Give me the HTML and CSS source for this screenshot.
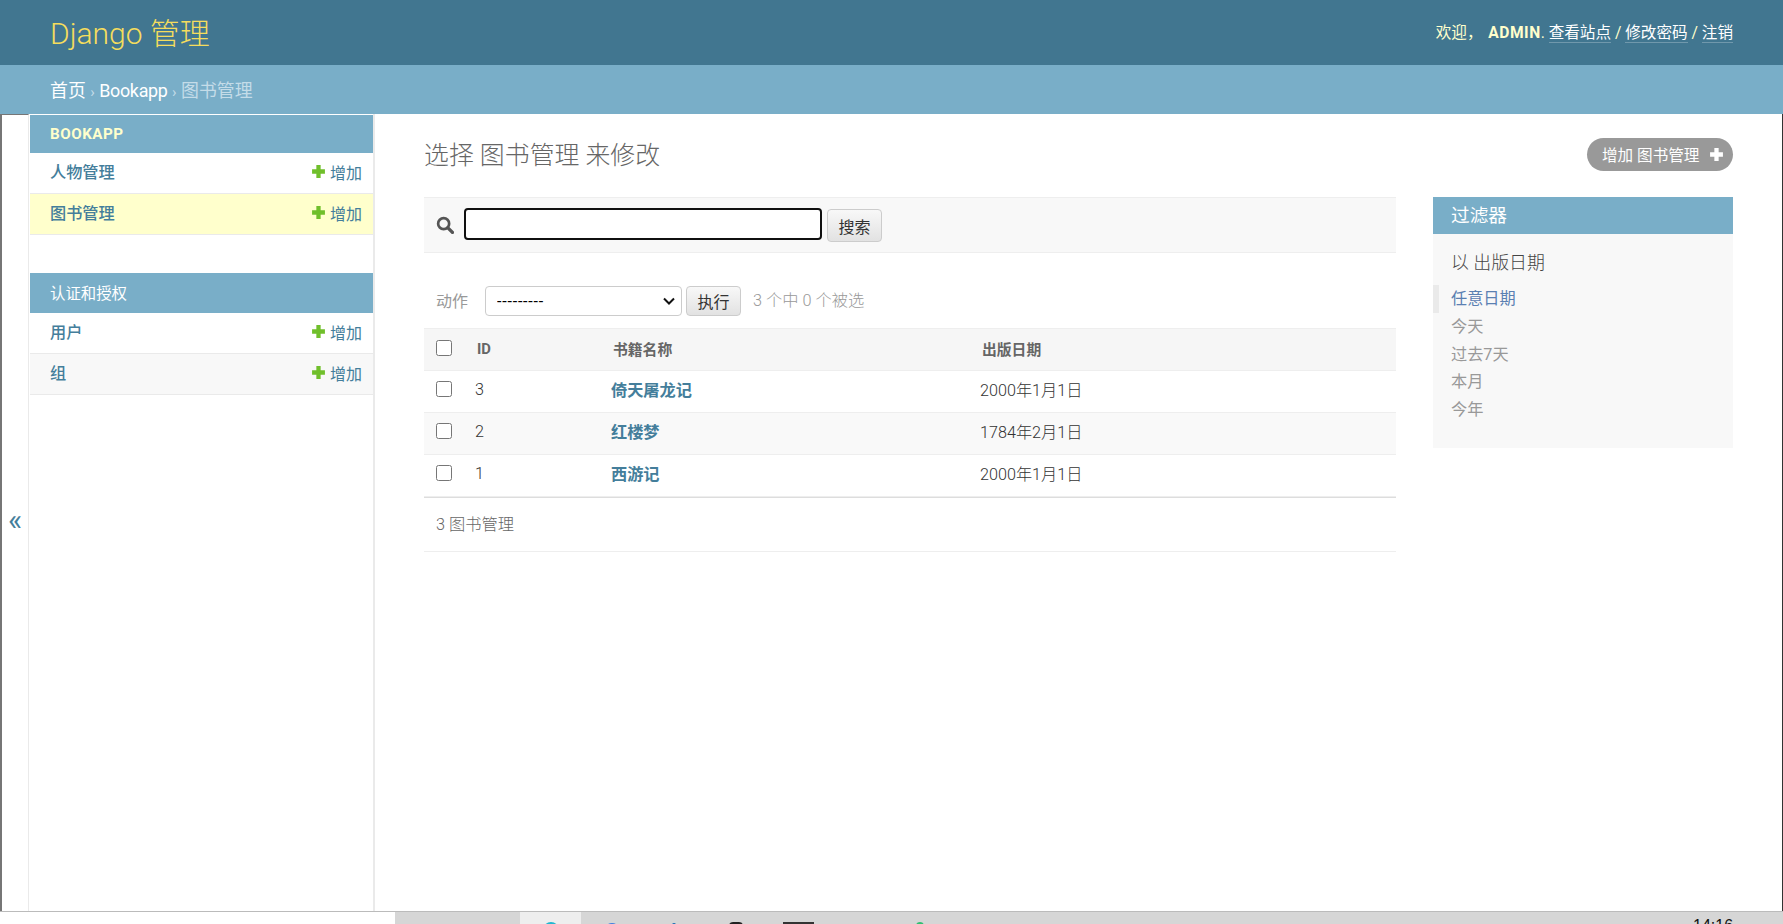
FILE: index.html
```html
<!DOCTYPE html>
<html lang="zh-CN">
<head>
    <meta charset="UTF-8">
    <title>选择 图书管理 来修改 | Django 站点管理员</title>
    <link rel="stylesheet" href="styles.css">
</head>
<body>
    <div class="window">
        <div id="header">
            <div class="branding">Django 管理</div>
            <div class="usertools">
                欢迎， <strong>ADMIN</strong>.
                <a href="#">查看站点</a> / <a href="#">修改密码</a> / <a href="#">注销</a>
            </div>
        </div>
        <div class="breadcrumbs">
            <a href="#">首页</a> <span class="sep">›</span> <a href="#" class="crumb-app">Bookapp</a> <span class="sep">›</span> 图书管理
        </div>
        <div class="main">
            <button class="toggle-nav">«</button>
            <div class="sidebar">
                <div class="app">
                    <div class="caption bold">BOOKAPP</div>
                    <div class="app-row">
                        <a href="#" class="model">人物管理</a>
                        <a href="#" class="addlink"><svg class="plus" viewBox="0 0 14 14"><path d="M5 1h4v4h4v4H9v4H5V9H1V5h4z" fill="#70bf2b"/></svg>增加</a>
                    </div>
                    <div class="app-row current">
                        <a href="#" class="model">图书管理</a>
                        <a href="#" class="addlink"><svg class="plus" viewBox="0 0 14 14"><path d="M5 1h4v4h4v4H9v4H5V9H1V5h4z" fill="#70bf2b"/></svg>增加</a>
                    </div>
                </div>
                <div class="app">
                    <div class="caption">认证和授权</div>
                    <div class="app-row">
                        <a href="#" class="model">用户</a>
                        <a href="#" class="addlink"><svg class="plus" viewBox="0 0 14 14"><path d="M5 1h4v4h4v4H9v4H5V9H1V5h4z" fill="#70bf2b"/></svg>增加</a>
                    </div>
                    <div class="app-row alt">
                        <a href="#" class="model">组</a>
                        <a href="#" class="addlink"><svg class="plus" viewBox="0 0 14 14"><path d="M5 1h4v4h4v4H9v4H5V9H1V5h4z" fill="#70bf2b"/></svg>增加</a>
                    </div>
                </div>
            </div>
            <div class="content">
                <div class="content-head">
                    <h1>选择 图书管理 来修改</h1>
                    <a href="#" class="addbtn"><span class="addbtn-text">增加 图书管理</span><svg class="plus-white" viewBox="0 0 14 14"><path d="M5 1h4v4h4v4H9v4H5V9H1V5h4z" fill="#fff"/></svg></a>
                </div>
                <div class="changelist">
                    <div class="list">
                        <div class="toolbar">
                            <svg class="search-icon" viewBox="0 0 16 16"><circle cx="6.8" cy="6.8" r="4.9" fill="none" stroke="#555" stroke-width="2.4"/><path d="M10.6 10.6l4 4" stroke="#555" stroke-width="3" stroke-linecap="round"/></svg>
                            <input type="text" class="search-input">
                            <input type="button" class="btn" value="搜索">
                        </div>
                        <div class="actions">
                            <label>动作</label>
                            <select class="action-select"><option>---------</option></select>
                            <input type="button" class="btn" value="执行">
                            <span class="counter">3 个中 0 个被选</span>
                        </div>
                        <table>
                            <tr class="head">
                                <th class="col-check"><input type="checkbox"></th>
                                <th class="col-id">ID</th>
                                <th class="col-name">书籍名称</th>
                                <th>出版日期</th>
                            </tr>
                            <tr>
                                <td class="col-check"><input type="checkbox"></td>
                                <td class="col-id">3</td>
                                <td class="col-name"><a href="#">倚天屠龙记</a></td>
                                <td>2000年1月1日</td>
                            </tr>
                            <tr class="alt">
                                <td class="col-check"><input type="checkbox"></td>
                                <td class="col-id">2</td>
                                <td class="col-name"><a href="#">红楼梦</a></td>
                                <td>1784年2月1日</td>
                            </tr>
                            <tr>
                                <td class="col-check"><input type="checkbox"></td>
                                <td class="col-id">1</td>
                                <td class="col-name"><a href="#">西游记</a></td>
                                <td>2000年1月1日</td>
                            </tr>
                        </table>
                        <div class="paginator">3 图书管理</div>
                    </div>
                    <div class="filter">
                        <h2>过滤器</h2>
                        <h3>以 出版日期</h3>
                        <ul>
                            <li class="selected"><a href="#">任意日期</a></li>
                            <li><a href="#">今天</a></li>
                            <li><a href="#">过去7天</a></li>
                            <li><a href="#">本月</a></li>
                            <li><a href="#">今年</a></li>
                        </ul>
                    </div>
                </div>
            </div>
        </div>
    </div>
    <div class="taskbar">
        <div class="task-blank"></div>
        <div class="task-icons">
            <div class="task-active"><span class="dot dot-cyan"></span></div>
            <span class="dot dot-blue"></span>
            <span class="dot dot-small"></span>
            <span class="dot dot-black"></span>
            <span class="dot dot-dark"></span>
            <span class="dot dot-green"></span>
        </div>
        <div class="clock">14:16</div>
    </div>
</body>
</html>
```

FILE: styles.css
```css
*{
    box-sizing: border-box;
}
body{
    margin: 0;
    height: 924px;
    overflow: hidden;
    font-family: Roboto, "Noto Sans CJK SC", "Liberation Sans", sans-serif;
    font-size: 14px;
    color: #333;
    background: #fff;
}
a{
    text-decoration: none;
}
.window{
    height: 912px;
    display: flex;
    flex-direction: column;
    border-bottom: 1px solid #bbb;
}
#header{
    height: 65px;
    flex: none;
    background: #417690;
    color: #ffc;
    display: flex;
    justify-content: space-between;
    align-items: center;
    padding: 0 50px;
}
.branding{
    font-size: 30px;
    font-weight: 300;
    color: #f5dd5d;
    margin-top: -3px;
}
.usertools{
    font-size: 15.6px;
    margin-top: -3px;
}
.usertools strong{
    font-weight: 700;
    letter-spacing: 0.5px;
    margin-left: 2px;
}
.usertools a{
    color: #fff;
    border-bottom: 1px solid rgba(255,255,255,0.25);
}
.breadcrumbs{
    height: 49px;
    flex: none;
    background: #79aec8;
    color: #c4dce8;
    font-size: 17.9px;
    padding: 0 50px;
    line-height: 52px;
}
.breadcrumbs a{
    color: #fff;
}
.breadcrumbs .crumb-app{
    letter-spacing: -0.3px;
}
.breadcrumbs .sep{
    font-size: 15px;
}
.main{
    flex: 1;
    display: flex;
    min-height: 0;
    border-right: 1px solid #333;
}
.toggle-nav{
    width: 29px;
    flex: none;
    padding: 13px 0 0;
    background: #fff;
    border: 0;
    border-left: 2px solid #767676;
    border-top: 1px solid #767676;
    border-right: 1px solid #eaeaea;
    color: #447e9b;
    font-size: 30px;
    font-family: inherit;
}
.sidebar{
    width: 346px;
    flex: none;
    border-right: 2px solid #eaeaea;
    padding-top: 1px;
    padding-left: 1px;
}
.app{
    margin-bottom: 38px;
}
.caption{
    height: 38px;
    background: #79aec8;
    color: #fff;
    font-size: 15.4px;
    padding: 0 20px;
    line-height: 38px;
}
.app + .app .caption{
    height: 40px;
    line-height: 43px;
}
.caption.bold{
    color: #ffc;
    font-size: 15.2px;
    font-weight: 700;
    letter-spacing: 0.5px;
}
.app-row{
    height: 41px;
    display: flex;
    justify-content: space-between;
    align-items: center;
    padding: 0 11px 0 20px;
    border-bottom: 1px solid #eaeaea;
}
.app-row.current{
    background: #ffc;
}
.app-row.alt{
    background: #f8f8f8;
}
.model{
    color: #447e9b;
    font-size: 16.2px;
    font-weight: 500;
    margin-top: -5px;
}
.addlink{
    color: #447e9b;
    font-size: 16px;
    display: flex;
    align-items: center;
    margin-top: -3px;
}
.plus{
    width: 15px;
    height: 15px;
    margin-right: 4px;
}
.content{
    flex: 1;
    min-width: 0;
    padding: 24px 49px 0 49px;
}
.content-head{
    display: flex;
    justify-content: space-between;
    align-items: flex-start;
    height: 59px;
}
h1{
    margin: 2px 0 0;
    font-size: 24.9px;
    font-weight: 300;
    color: #666;
    line-height: 32px;
}
.addbtn{
    height: 33px;
    width: 146px;
    border-radius: 17px;
    background: #999;
    color: #fff;
    font-size: 15.6px;
    display: flex;
    align-items: center;
    justify-content: space-between;
    padding: 0 9px 0 15px;
}
.addbtn-text{
    margin-top: -2px;
}
.plus-white{
    width: 15px;
    height: 15px;
}
.changelist{
    display: flex;
    gap: 37px;
    align-items: flex-start;
}
.list{
    width: 972px;
    flex: none;
}
.toolbar{
    height: 56px;
    background: #f8f8f8;
    border-top: 1px solid #eee;
    border-bottom: 1px solid #eee;
    display: flex;
    align-items: center;
    padding: 0 12px;
}
.search-icon{
    width: 18px;
    height: 18px;
    margin-right: 10px;
}
.search-input{
    width: 358px;
    height: 32px;
    border: 2px solid #101010;
    border-radius: 4px;
    background: #fff;
    padding: 0;
    margin-top: -2px;
}
.btn{
    height: 33px;
    width: 55px;
    margin-left: 5px;
    border: 1px solid #ccc;
    border-radius: 4px;
    background: linear-gradient(#f8f8f8, #e2e2e2);
    color: #333;
    font-size: 16px;
    font-family: inherit;
    padding: 1px 0 0;
}
.actions{
    height: 30px;
    margin-top: 33px;
    margin-bottom: 12px;
    display: flex;
    align-items: center;
    padding-left: 12px;
}
.actions label{
    color: #999;
    font-size: 16px;
    width: 49px;
    margin-top: -2px;
}
.action-select{
    width: 197px;
    height: 30px;
    border: 1px solid #ccc;
    border-radius: 4px;
    background: #fff url("data:image/svg+xml,%3Csvg xmlns='http://www.w3.org/2000/svg' width='12' height='8'%3E%3Cpath d='M1 1.5l5 5 5-5' fill='none' stroke='%23111' stroke-width='2'/%3E%3C/svg%3E") no-repeat right 6px center;
    appearance: none;
    color: #000;
    font-size: 16px;
    letter-spacing: 0.8px;
    font-family: inherit;
    padding-left: 11px;
}
.actions .btn{
    height: 30px;
    margin-left: 4px;
    padding: 0;
}
.counter{
    margin-left: 12px;
    color: #999;
    font-size: 16.3px;
    font-weight: 300;
    margin-top: -5px;
}
table{
    width: 100%;
    border-collapse: collapse;
    table-layout: fixed;
    border-top: 1px solid #eee;
}
tr{
    height: 42px;
    border-bottom: 1px solid #eee;
}
tr.head{
    background: #f6f6f6;
}
tr.alt{
    background: #f9f9f9;
}
th{
    text-align: left;
    font-size: 14.8px;
    font-weight: 700;
    color: #666;
    padding: 0 0 2px 2px;
}
td{
    font-size: 16.2px;
    font-weight: 300;
    padding: 0 0 6px;
}
th.col-check{
    padding-bottom: 0;
}
.col-check{
    width: 51px;
    padding-left: 12px;
}
.col-check input{
    margin: 0 0 4px;
    width: 16px;
    height: 16px;
    display: block;
}
td.col-check{
    padding-bottom: 2px;
}
.col-id{
    width: 136px;
}
td.col-id{
    padding-bottom: 4px;
}
.col-name{
    width: 369px;
}
td.col-name a{
    color: #447e9b;
    font-size: 16.2px;
    font-weight: 700;
}
.paginator{
    height: 55px;
    border-top: 1px solid #ddd;
    border-bottom: 1px solid #eee;
    color: #666;
    font-size: 16.3px;
    font-weight: 300;
    line-height: 54px;
    padding-left: 12px;
}
.filter{
    width: 300px;
    height: 251px;
    flex: none;
    background: #f8f8f8;
}
.filter h2{
    margin: 0;
    height: 37px;
    background: #79aec8;
    color: #fff;
    font-size: 18.7px;
    font-weight: 400;
    line-height: 39px;
    padding-left: 18px;
}
.filter h3{
    margin: 16px 0 9px;
    padding-left: 18px;
    font-size: 17.9px;
    font-weight: 300;
    color: #444;
    line-height: 26px;
}
.filter ul{
    margin: 0;
    padding: 0;
    list-style: none;
}
.filter li{
    height: 27.8px;
    line-height: 27px;
    padding-left: 18px;
    font-size: 16.2px;
}
.filter li a{
    color: #999;
}
.filter li.selected{
    border-left: 6px solid #eaeaea;
    padding-left: 12px;
}
.filter li.selected a{
    color: #5b80b2;
}
.taskbar{
    height: 12px;
    overflow: hidden;
    background: #d6d6d6;
    display: flex;
    position: relative;
}
.task-blank{
    width: 395px;
    flex: none;
    background: #fff;
}
.task-icons{
    display: flex;
    align-items: flex-start;
    margin-left: 125px;
}
.task-active{
    width: 61px;
    height: 12px;
    background: #eee;
    display: flex;
    justify-content: center;
}
.dot{
    display: block;
    flex: none;
    margin-top: 10px;
    border-radius: 50%;
    width: 16px;
    height: 16px;
}
.dot-cyan{
    background: #1fb6d0;
}
.dot-blue{
    background: #3f7fe0;
    margin-left: 23px;
    margin-top: 11px;
}
.dot-small{
    background: #1a6fb5;
    width: 4px;
    height: 4px;
    margin-left: 52px;
    margin-top: 11px;
}
.dot-black{
    background: #222;
    width: 14px;
    margin-left: 53px;
    border-radius: 4px;
}
.dot-dark{
    background: #333;
    width: 31px;
    border-radius: 0;
    margin-left: 40px;
}
.dot-green{
    background: #2fbf71;
    width: 8px;
    height: 8px;
    margin-left: 102px;
}
.clock{
    position: absolute;
    left: 1693px;
    top: 6px;
    font-size: 16px;
    line-height: 16px;
    color: #111;
    font-family: "Liberation Sans", sans-serif;
}
```
